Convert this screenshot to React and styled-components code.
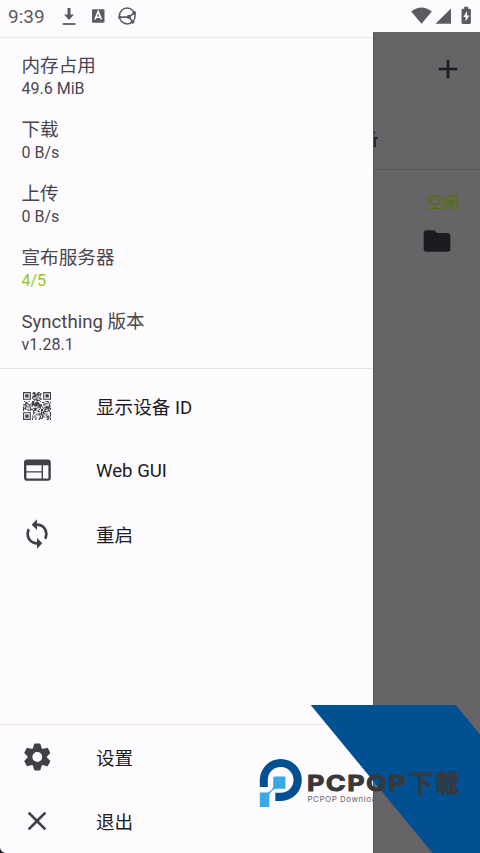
import React from "react";
import styled, { createGlobalStyle } from "styled-components";

const Global = createGlobalStyle`
  *{box-sizing:border-box}
  body{margin:0;background:#fefbff;overflow:hidden;font-family:Roboto,"Noto Sans CJK SC",sans-serif}
  svg{display:block}
`;
const Screen = styled.div`
  position:relative;width:480px;height:853px;overflow:hidden;
  display:grid;grid-template-columns:373px 107px;background:#fefbff;
`;
const StatusBar = styled.header`
  position:absolute;top:0;left:0;width:480px;height:32px;
  display:flex;align-items:center;padding:0 6px 0 8px;color:#5c5b5f;
`;
const Clock = styled.span`font-size:19px;line-height:32px;width:52px;white-space:nowrap;padding-top:1px;`;
const StatusIcons = styled.div`
  display:flex;align-items:center;margin-left:${p => p.$push ? "auto" : "0"};
`;
const Drawer = styled.aside`
  display:flex;flex-direction:column;padding-top:37px;height:853px;background:#fefbff;
`;
const Stats = styled.dl`
  margin:0;height:332px;border-top:1px solid #ece9ed;border-bottom:1px solid #e6e3e7;padding:14px 0 0 21.5px;
`;
const Stat = styled.div`height:64px;color:#48464c;`;
const StatName = styled.dt`font-size:18.6px;line-height:29px;height:27px;`;
const StatValue = styled.dd`
  margin:0;font-size:16px;line-height:20px;color:${p => p.$good ? "#8fca09" : "#48464c"};
`;
const Menu = styled.nav`padding-top:5px;`;
const Footer = styled(Menu)`
  margin-top:auto;height:129px;border-top:1px solid #efe6e9;padding-top:0;
`;
const Item = styled.div`
  display:flex;align-items:center;height:64px;padding-left:21px;font-size:18.6px;color:#1c1b20;
`;
const IconSlot = styled.span`
  width:75px;color:#414047;display:flex;align-items:center;
`;
const Label = styled.span`padding-bottom:${p => p.$latin ? 0 : 2}px;padding-top:${p => p.$latin ? 2 : 0}px;`;
const Scrim = styled.main`
  margin-top:32px;background:#666467;border-left:1px solid #545356;color:#1c1b20;overflow:hidden;
`;
const Toolbar = styled.div`
  height:74px;display:flex;justify-content:flex-end;align-items:center;padding:0 16px 0 0;
`;
const Tabs = styled.div`height:64px;border-bottom:1px solid #565458;padding-top:20px;`;
const Tab = styled.span`
  width:4.5px;height:26px;display:flex;justify-content:flex-end;overflow:hidden;
  white-space:nowrap;font-size:17px;line-height:26px;font-weight:500;
`;
const Folder = styled.div`
  padding:20px 21px 0 0;display:flex;flex-direction:column;align-items:flex-end;gap:9px;
  svg{margin-right:6px}
`;
const State = styled.span`font-size:16px;line-height:26px;color:#4e7205;`;
const Brand = styled.div`position:absolute;left:240px;top:700px;width:240px;height:153px;`;
const BrandName = styled.div`
  position:absolute;left:66.5px;top:71px;height:22px;display:flex;align-items:center;color:#373839;
`;
const Wordmark = styled.span`
  width:102.5px;font:700 22px/20px Inter,sans-serif;letter-spacing:1.2px;padding-top:2px;
  transform:scaleX(1.22);transform-origin:left center;white-space:nowrap;-webkit-text-stroke:.9px #373839;
`;
const BrandHan = styled.span`
  font:700 24px/22px "Noto Sans CJK SC",sans-serif;white-space:nowrap;letter-spacing:2px;
  -webkit-text-stroke:.5px #373839;
`;
const Tagline = styled.span`
  position:absolute;left:67.5px;top:94px;font:400 8px/10px Inter,sans-serif;
  letter-spacing:.5px;color:#68676b;white-space:nowrap;
`;

const qrRows = (() => {
  const n = 25, out = [];
  let seed = 97;
  const finder = (x, y) => {
    const m = Math.max(Math.abs(x - 3), Math.abs(y - 3));
    return m === 3 || m < 2;
  };
  for (let y = 0; y < n; y++) for (let x = 0; x < n; x++) {
    seed = (seed * 16807) % 2147483647;
    let on = seed % 100 < 52;
    if (x < 8 && y < 8) on = x < 7 && y < 7 && finder(x, y);
    else if (x > 16 && y < 8) on = x > 17 && y < 7 && finder(x - 18, y);
    else if (x < 8 && y > 16) on = x < 7 && y > 17 && finder(x, y - 18);
    if (on) out.push(`M${x} ${y}h1v1h-1z`);
  }
  return out.join("");
})();

const Qr = () => <svg width="32" height="32" viewBox="-1.8 -1.8 28.6 28.6"><path d={qrRows} fill="currentColor"/></svg>;
const Material = ({ d }) => <svg width="32" height="32" viewBox="0 0 24 24" fill="currentColor"><path d={d}/></svg>;
const Web = () => (
  <svg width="32" height="32" viewBox="0 0 32 32" fill="none" stroke="currentColor">
    <rect x="4.2" y="6.6" width="24.4" height="19" rx="1.8" strokeWidth="2.4"/>
    <path d="M4 8.8h24.6" strokeWidth="5"/><path d="M5 17.9h16M21.3 11v14" strokeWidth="1.4"/>
  </svg>
);
const Gear = () => (
  <svg width="32" height="32" viewBox="-16.3 -16 32 32">
    <circle r="7.3" fill="none" stroke="currentColor" strokeWidth="4.8"/>
    {[0, 60, 120, 180, 240, 300].map(a => (
      <path key={a} transform={`rotate(${a})`} fill="currentColor" d="M-4.6 -8l1.4-4.7q.2-.8 1-.8h4.4q.8 0 1 .8l1.4 4.7z"/>
    ))}
  </svg>
);
const icons = {
  sync: "M12 4V1L8 5l4 4V6c3.31 0 6 2.69 6 6 0 1.01-.25 1.97-.7 2.8l1.46 1.46C19.54 15.03 20 13.57 20 12c0-4.42-3.58-8-8-8zm0 14c-3.31 0-6-2.69-6-6 0-1.01.25-1.97.7-2.8L5.24 7.74C4.46 8.97 4 10.43 4 12c0 4.42 3.58 8 8 8v3l4-4-4-4v3z",
  close: "M19 6.41 17.59 5 12 10.59 6.41 5 5 6.41 10.59 12 5 17.59 6.41 19 12 13.41 17.59 19 19 17.59 13.41 12z",
  add: "M19 13h-6v6h-2v-6H5v-2h6V5h2v6h6v2z",
  folder: "M10 4H4c-1.1 0-1.99.9-1.99 2L2 18c0 1.1.9 2 2 2h16c1.1 0 2-.9 2-2V8c0-1.1-.9-2-2-2h-8l-2-2z",
};

const stats = [
  ["内存占用", "49.6 MiB"], ["下载", "0 B/s"], ["上传", "0 B/s"],
  ["宣布服务器", "4/5", true], ["Syncthing 版本", "v1.28.1"],
];
const MenuItem = ({ icon, latin, children }) => (
  <Item><IconSlot>{icon}</IconSlot><Label $latin={latin}>{children}</Label></Item>
);

export default function App() {
  return (
    <Screen>
      <Global />
      <Drawer>
        <Stats>
          {stats.map(([name, value, good]) => (
            <Stat key={name}><StatName>{name}</StatName><StatValue $good={good}>{value}</StatValue></Stat>
          ))}
        </Stats>
        <Menu>
          <MenuItem icon={<Qr />}>显示设备 ID</MenuItem>
          <MenuItem icon={<Web />} latin>Web GUI</MenuItem>
          <MenuItem icon={<Material d={icons.sync} />}>重启</MenuItem>
        </Menu>
        <Footer>
          <MenuItem icon={<Gear />}>设置</MenuItem>
          <MenuItem icon={<Material d={icons.close} />}>退出</MenuItem>
        </Footer>
      </Drawer>
      <Scrim>
        <Toolbar><Material d={icons.add} /></Toolbar>
        <Tabs><Tab>备</Tab></Tabs>
        <Folder><State>空闲</State><Material d={icons.folder} /></Folder>
      </Scrim>
      <StatusBar>
        <Clock>9:39</Clock>
        <StatusIcons>
          <svg width="80" height="24" viewBox="60 4 80 24" fill="none" stroke="currentColor">
            <path d="M69 8v9" strokeWidth="3"/><path d="M64 14.5h10l-5 5.5z" fill="currentColor" stroke="none"/>
            <path d="M62.7 24h12.8" strokeWidth="1.8"/>
            <rect x="92" y="9.2" width="12.5" height="13.6" rx="1" fill="currentColor" stroke="none"/>
            <path d="M95 19.5l3.2-8 3.2 8M96 17.2h4.6" stroke="#fefbff" strokeWidth="1.6"/>
            <circle cx="127.2" cy="16" r="7.9" strokeWidth="1.5"/>
            <path d="M119.7 17.2l9.2-.3 5.5-4M128.9 16.9l3.8 5" strokeWidth="1.6"/>
            <g fill="currentColor" stroke="none"><circle cx="119.8" cy="17.2" r="1.6"/><circle cx="129" cy="16.9" r="2.1"/><circle cx="134.2" cy="12.9" r="1.9"/><circle cx="132.6" cy="21.8" r="1.9"/></g>
          </svg>
        </StatusIcons>
        <StatusIcons $push>
          <svg width="64" height="24" viewBox="410 4 64 24" fill="currentColor">
            <path d="M411.2 11.4q10.3-8 20.6 0l-10.3 12.3z"/><path d="M451 8.5v15.3h-15.5z"/>
            <path d="M464.2 6.8h4v2h1.4q1.3 0 1.3 1.3v12.5q0 1.3-1.3 1.3h-6.8q-1.3 0-1.3-1.3V10.1q0-1.3 1.3-1.3h1.4z"/>
            <path d="M467 11l-3.6 6h2.2v4.5l3.7-6h-2.3z" fill="#fefbff"/>
          </svg>
        </StatusIcons>
      </StatusBar>
      <Brand>
        <svg width="240" height="153" viewBox="240 700 240 153">
          <path d="M310.7 705h145l24.3 29.5V853h-47.5z" fill="#005092"/>
          <path d="M259.8 787V780A21 21 0 1 1 281 801H275.3V792.8H281A12.9 12.9 0 1 0 267.8 779V787z" fill="#005092"/>
          <path d="M273.2 778q0-1.5 1.5-1.5h10.7v12.3h-8.3q-4 0-6.2 3.4l-1.6 2.4v12.4h-9.5v-14.5h8.5q3.9-2.3 4.9-5.3z" fill="#39a8e5"/>
        </svg>
        <BrandName><Wordmark>PCPOP</Wordmark><BrandHan>下载</BrandHan></BrandName>
        <Tagline>PCPOP Download</Tagline>
      </Brand>
      <Corner width="5" height="5" viewBox="0 0 5 5"><path d="M0 0Q1 4 5 5H0z" fill="#1c1b20"/></Corner>
    </Screen>
  );
}

const Corner = styled.svg`position:absolute;left:0;bottom:0;`;
